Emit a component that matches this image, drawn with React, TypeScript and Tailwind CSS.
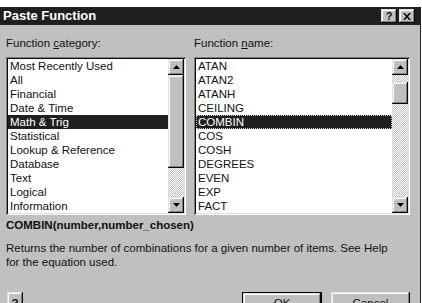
const categories = [
  "Most Recently Used",
  "All",
  "Financial",
  "Date & Time",
  "Math & Trig",
  "Statistical",
  "Lookup & Reference",
  "Database",
  "Text",
  "Logical",
  "Information",
];

const functions = ["ATAN", "ATAN2", "ATANH", "CEILING", "COMBIN", "COS", "COSH", "DEGREES", "EVEN", "EXP", "FACT"];

// raised 3d edge, win9x style
const raised =
  "bg-[#c0c0c0] shadow-[inset_-1px_-1px_#0a0a0a,inset_1px_1px_#e0e0e0,inset_-2px_-2px_#808080,inset_2px_2px_#ffffff]";
const track = "bg-[image:repeating-conic-gradient(#c0c0c0_0%_25%,#ffffff_0%_50%)] bg-size-[2px_2px]";

const Arrow = ({ down }: { down?: boolean }) => (
  <svg width="7" height="4" viewBox="0 0 7 4">
    {down ? <path d="M0 0h7L3.5 4z" fill="#000" /> : <path d="M0 4h7L3.5 0z" fill="#000" />}
  </svg>
);

const ArrowBtn = ({ down }: { down?: boolean }) => (
  <div className={`flex h-4 w-4 shrink-0 items-center justify-center ${raised}`}>
    <Arrow down={down} />
  </div>
);

const ListBox = ({
  items,
  selected,
  focus,
  className,
  scroll,
}: {
  items: string[];
  selected: string;
  focus?: boolean;
  className: string;
  scroll: React.ReactNode;
}) => (
  <div
    className={`flex bg-white p-[2px] shadow-[inset_1px_1px_#808080,inset_-1px_-1px_#ffffff,inset_2px_2px_#0a0a0a,inset_-2px_-2px_#dfdfdf] ${className}`}
  >
    <div className="flex-1 overflow-hidden">
      {items.map((it) => (
        <div
          key={it}
          className={`h-[14px] whitespace-nowrap pl-[2px] leading-[14px] ${
            it === selected ? "bg-[#1f1f1f] text-white" : ""
          } ${it === selected && focus ? "outline-1 outline-dotted -outline-offset-1 outline-[#cfcfcf]" : ""}`}
        >
          {it}
        </div>
      ))}
    </div>
    {scroll}
  </div>
);

export default function App() {
  return (
    <div className="h-[303px] w-[422px] overflow-hidden bg-white pt-[7px] font-['Liberation_Sans',Arial,sans-serif] text-[11.5px] text-[#111]">
      <div className="h-[296px] w-[421px] border-r border-[#222] bg-[#c0c0c0]">
        {/* title bar */}
        <div className="flex h-[18px] items-center justify-between bg-[#1f1f1f] pl-[3px] pr-[5px]">
          <span className="text-[13px] font-bold text-white">Paste Function</span>
          <div className="flex gap-[2px]">
            <div className={`flex h-[14px] w-4 items-center justify-center text-[11px] font-bold leading-none ${raised}`}>?</div>
            <div className={`flex h-[14px] w-4 items-center justify-center ${raised}`}>
              <svg width="8" height="7" viewBox="0 0 8 7">
                <path d="M0 0h2l2 2.5L6 0h2L5 3.5 8 7H6L4 4.5 2 7H0l3-3.5z" fill="#000" />
              </svg>
            </div>
          </div>
        </div>

        <div className="pl-[6px]">
          <div className="mt-[11px] flex h-[14px] leading-[14px]">
            <div className="w-[188px]">
              Function <u>c</u>ategory:
            </div>
            <div>
              Function <u>n</u>ame:
            </div>
          </div>

          <div className="mt-[7px] flex gap-2">
            <ListBox
              items={categories}
              selected="Math & Trig"
              className="w-[180px]"
              scroll={
                <div className="flex w-4 flex-col">
                  <ArrowBtn />
                  <div className={`h-[93px] ${raised}`} />
                  <div className={`flex-1 ${track}`} />
                  <ArrowBtn down />
                </div>
              }
            />
            <ListBox
              items={functions}
              selected="COMBIN"
              focus
              className="w-[216px]"
              scroll={
                <div className="flex w-4 flex-col">
                  <ArrowBtn />
                  <div className={`h-[7px] ${track}`} />
                  <div className={`h-[22px] ${raised}`} />
                  <div className={`flex-1 ${track}`} />
                  <ArrowBtn down />
                </div>
              }
            />
          </div>

          <div className="mt-[3px] h-[14px] font-bold leading-[14px]">COMBIN(number,number_chosen)</div>
          <p className="mt-[9px] leading-[14px]">
            Returns the number of combinations for a given number of items. See Help
            <br />
            for the equation used.
          </p>

          <div className="mt-[23px] flex items-start">
            <div className={`ml-[1px] flex h-[22px] w-4 items-start justify-center pt-[3px] font-bold ${raised}`}>?</div>
            <div className="ml-auto flex gap-[9px] pr-[10px]">
              <div className="h-[23px] w-[80px] border border-black">
                <div className={`flex h-full items-center justify-center ${raised}`}>OK</div>
              </div>
              <div className={`flex h-[23px] w-[79px] items-center justify-center ${raised}`}>Cancel</div>
            </div>
          </div>
        </div>
      </div>
    </div>
  );
}
